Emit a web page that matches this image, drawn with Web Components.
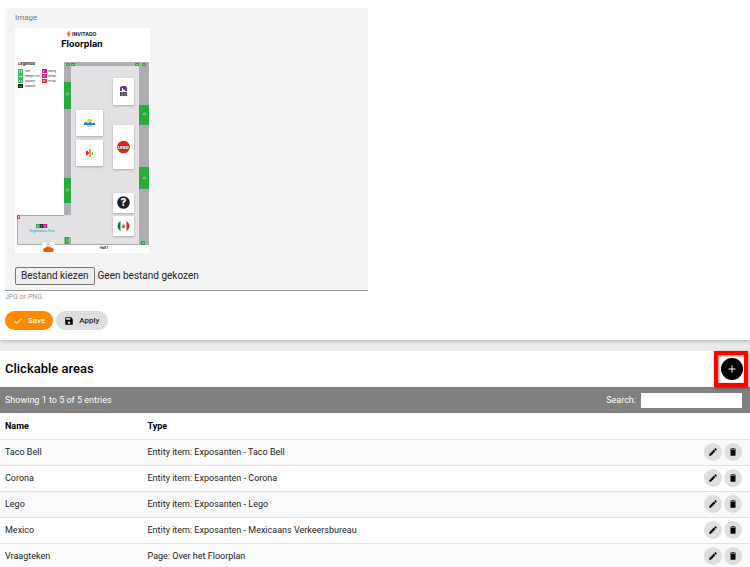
<!DOCTYPE html>
<html lang="nl">
<head>
<meta charset="utf-8">
<meta name="viewport" content="width=device-width, initial-scale=1">
<title>Floorplan</title>
<style>
  body {
    margin: 0;
    background: #ebebeb;
    color: #222;
    font: 9px/12px Roboto, "Liberation Sans", sans-serif;
  }
</style>
</head>
<body>
<floorplan-page></floorplan-page>

<script>
const ICONS = {
  check: "M9 16.17 4.83 12l-1.42 1.41L9 19 21 7l-1.41-1.41z",
  save: "M17 3H5a2 2 0 0 0-2 2v14a2 2 0 0 0 2 2h14a2 2 0 0 0 2-2V7l-4-4zm-5 16a3 3 0 1 1 0-6 3 3 0 0 1 0 6zm3-10H5V5h10v4z",
  add: "M19 13h-6v6h-2v-6H5v-2h6V5h2v6h6z",
  edit: "M3 17.25V21h3.75L17.81 9.94l-3.75-3.75L3 17.25zM20.71 7.04a1 1 0 0 0 0-1.41l-2.34-2.34a1 1 0 0 0-1.41 0l-1.83 1.83 3.75 3.75 1.83-1.83z",
  trash: "M6 19a2 2 0 0 0 2 2h8a2 2 0 0 0 2-2V7H6v12zM19 4h-3.5l-1-1h-5l-1 1H5v2h14V4z",
};

class UiIcon extends HTMLElement {
  constructor() {
    super();
    this.attachShadow({ mode: "open" });
  }

  connectedCallback() {
    this.shadowRoot.innerHTML = /*html*/ `
      <style>
        :host { display: block; width: 10px; height: 10px; }
        svg { display: block; width: 100%; height: 100%; fill: currentColor; }
      </style>
      <svg viewBox="0 0 24 24" aria-hidden="true"><path d="${ICONS[this.getAttribute("name")]}"/></svg>
    `;
  }
}

class PillButton extends HTMLElement {
  constructor() {
    super();
    this.attachShadow({ mode: "open" });
  }

  connectedCallback() {
    this.shadowRoot.innerHTML = /*html*/ `
      <style>
        :host { display: block; font-size: 8px; }
        button {
          display: flex;
          align-items: center;
          gap: 5px;
          height: 19px;
          padding: 0 8px;
          border: 0;
          border-radius: 10px;
          background: #dedede;
          color: #222;
          font: inherit;
          font-weight: 500;
          cursor: pointer;
        }
        ui-icon { color: #000; }
        :host([primary]) button { background: #ff8a00; color: #fff; }
        :host([primary]) ui-icon { color: #fff; }
      </style>
      <button type="button"><ui-icon name="${this.getAttribute("icon")}"></ui-icon><slot></slot></button>
    `;
  }
}

class RoundButton extends HTMLElement {
  constructor() {
    super();
    this.attachShadow({ mode: "open" });
  }

  connectedCallback() {
    this.shadowRoot.innerHTML = /*html*/ `
      <style>
        :host { display: block; position: relative; }
        button {
          display: grid;
          place-items: center;
          width: 18px;
          height: 18px;
          padding: 0;
          border: 0;
          border-radius: 50%;
          background: #dedede;
          color: #000;
          cursor: pointer;
        }
        :host([dark]) button { width: 22px; height: 22px; background: #000; color: #fff; }
        :host([dark]) ui-icon { width: 12px; height: 12px; }
        /* frame that points out the button */
        :host([highlight])::after {
          content: "";
          position: absolute;
          inset: -7px -5px -7px -7px;
          border: 4px solid #f00;
          box-shadow: 1px 1px 3px rgba(0,0,0,.5), inset 1px 1px 3px rgba(0,0,0,.5);
          pointer-events: none;
        }
      </style>
      <button type="button" aria-label="${this.getAttribute("label")}"><ui-icon name="${this.getAttribute("icon")}"></ui-icon></button>
    `;
  }
}

class FloorMap extends HTMLElement {
  constructor() {
    super();
    this.attachShadow({ mode: "open" });
  }

  connectedCallback() {
    this.shadowRoot.innerHTML = /*html*/ `
      <style>
        :host { display: block; width: 135px; }
        svg { display: block; width: 100%; }
        text { font-family: Inter, sans-serif; fill: #222; }
        .title { font-size: 9px; font-weight: 700; fill: #000; }
        .brand { font-size: 5px; font-weight: 700; }
        .head { font-size: 4px; font-weight: 700; }
        .tiny { font-size: 2px; }
        .green { fill: #28ab38; }
        .booth { fill: #fff; filter: drop-shadow(0 1px 1px rgba(0,0,0,.25)); }
      </style>
      <svg viewBox="0 0 135 225" role="img" aria-label="Floorplan">
        <rect width="135" height="225" fill="#fff"/>
        <path d="M54 4v4l-2-2z" fill="#e3197d"/><path d="M54 4l2 2-2 2z" fill="#ffb000"/><path d="M52 5l2-2 1 1-2 2zM52 7l2 2 1-1z" fill="#f28c00"/>
        <text class="brand" x="57" y="8">INVITADO</text>
        <text class="title" x="67" y="19" text-anchor="middle">Floorplan</text>

        <text class="head" x="3" y="37">Legenda</text>
        <g fill="#2dbd5a">
          <rect x="3" y="41" width="5" height="5"/><rect x="3" y="46" width="5" height="5"/><rect x="3" y="51" width="5" height="4"/>
        </g>
        <rect x="3" y="56" width="5" height="4" fill="#222"/>
        <rect x="27" y="41" width="5" height="4" fill="#e5128c"/><rect x="27" y="46" width="5" height="4" fill="#e5128c"/>
        <rect x="27" y="51" width="5" height="4" fill="#e02f35"/>
        <g fill="none" stroke="#fff" stroke-width=".6">
          <path d="M4.500 42v3m2-3v3M4 48.500h3m-1-1 1 1-1 1M4.500 52v2m2-2v2M4.500 59l1-1 1 1M28 44l2-2M28 49l2-2M29 52v2m-1-1h2"/>
        </g>
        <g>
          <text class="tiny" x="10" y="44">Toilet</text><text class="tiny" x="10" y="49">Emergency exit</text>
          <text class="tiny" x="10" y="54">Food point</text><text class="tiny" x="10" y="59">Cloakroom</text>
          <text class="tiny" x="33" y="44">Catering</text><text class="tiny" x="33" y="49">Specials</text><text class="tiny" x="33" y="54">First aid</text>
        </g>

        <rect x="56" y="37" width="68" height="179" fill="#e3e1e3"/>
        <path d="M58 40v120m6-120v120m6-120v120m6-120v120m6-120v120m6-120v120m6-120v120m30-120v120" stroke="#e0dee0" stroke-width=".6"/>
        <rect x="2.500" y="187" width="54" height="29" fill="#e3e1e3"/>
        <path d="M49 187.500H2.500v29H134" fill="none" stroke="#aaa8ac"/>
        <rect x="49" y="34" width="85" height="4" fill="#b0aeb2"/>
        <rect x="49" y="35" width="7" height="152" fill="#b0aeb2"/>
        <rect x="49" y="209" width="7" height="8" fill="#aaa8ac"/>
        <rect x="124" y="35" width="10" height="182" fill="#aeacb0"/>

        <g class="green">
          <rect x="49" y="54" width="7" height="27"/><rect x="49" y="150" width="7" height="25"/>
          <rect x="124" y="77" width="10" height="20"/><rect x="124" y="139" width="10" height="22"/>
          <rect x="51" y="35" width="4" height="3" rx="1"/><rect x="56" y="35" width="4" height="3"/>
          <rect x="120" y="35" width="4" height="3"/><rect x="127" y="35" width="4" height="3" rx="1"/>
          <rect x="50" y="209" width="4" height="7"/><rect x="126" y="213" width="4" height="4"/>
        </g>
        <g fill="none" stroke="#d5f2d8" stroke-width=".4">
          <path d="M51.500 65h2v2h-2zM51.500 161h2v2h-2zM128.500 85h2v2h-2zM128.500 149h2v2h-2zM52 36.500h2M57 36.500h2M121 36.500h2M128 36.500h2M51 211q1-1 2 0v4M51 213h2M127 215h2m-1-1v2"/>
        </g>

        <rect class="booth" x="98" y="50" width="21" height="27"/>
        <rect class="booth" x="61" y="82" width="27" height="26"/>
        <rect class="booth" x="61" y="112" width="27" height="26"/>
        <rect class="booth" x="98" y="97" width="21" height="44"/>
        <rect class="booth" x="98" y="165" width="21" height="20"/>
        <rect class="booth" x="98" y="188" width="21" height="20"/>
        <g fill="#fff" stroke="#dedede" stroke-width=".5">
          <circle cx="108.500" cy="63" r="6"/><circle cx="74.500" cy="95" r="6"/><circle cx="74.500" cy="125" r="6"/>
        </g>

        <path d="M105 63v-3q0-2 3-2h2q2 0 2 3v2h-2v-2l-2 1v-2h-1v3z" fill="#702f9b"/>
        <path d="M105 64h7v4h-7z" fill="#444"/><path d="M106 65h2m1 0h2m-5 2h2m1 0h2" stroke="#fff" stroke-width=".5"/>
        <path d="M108 61h2v1h-2z" fill="#e5489b"/>

        <path d="M72 93q0-2 2.500-2t2.500 2z" fill="#f6bc22"/><path d="M70 93h9v1h-9z" fill="#ffe06b"/>
        <path d="M69 96q0-2 2-2t2 2q0-2 2-2t2 2q0-2 3-1v2H69z" fill="#267fc0"/><path d="M72 98h5" stroke="#62aad5"/>

        <rect x="71" y="123" width="2" height="4" fill="#d71b78"/><rect x="74" y="121" width="2" height="8" fill="#f49a27"/>
        <rect x="73" y="124" width="1" height="2" fill="#e84c50"/><rect x="77" y="124" width="1" height="3" fill="#65b84b"/>

        <circle cx="108.500" cy="119" r="6.300" fill="#df261d"/>
        <text x="108.500" y="121" text-anchor="middle" style="font-size:4px;font-weight:900;fill:#fff;stroke:#5e3316;stroke-width:.9;paint-order:stroke">LEGO</text>

        <circle cx="108.500" cy="174.500" r="6.300" fill="#202124"/>
        <text x="108.500" y="178" text-anchor="middle" style="font-size:10px;font-weight:800;fill:#fff">?</text>

        <circle cx="108.500" cy="198" r="6" fill="#fff" stroke="#ddd" stroke-width=".4"/>
        <path d="M105.500 193v10q-3-2-3-5t3-5z" fill="#087849"/><path d="M111.500 193v10q3-2 3-5t-3-5z" fill="#d52632"/>
        <path d="M107 198q1-3 3-1 1 3-1.500 3t-1.500-2z" fill="#a28545"/><path d="M107.500 199q1 1 2 0" stroke="#398247" stroke-width=".7" fill="none"/>

        <rect x="2" y="187" width="3" height="4" fill="#d9404a"/><path d="M3 188h1v2H3z" fill="#ffc7c9"/>
        <rect x="21" y="196" width="4" height="4" fill="#2bae4d"/><rect x="25" y="196" width="3" height="4" fill="#333"/><rect x="28" y="196" width="4" height="4" fill="#e5128c"/>
        <path d="M22 198h2m2 0h1m2 0h2" stroke="#fff" stroke-width=".6"/>
        <text x="27" y="204" text-anchor="middle" style="font-size:3px;font-weight:600;fill:#2db6d7">Registration Area</text>
        <circle cx="29.500" cy="216.500" r="2.500" fill="#fff"/><circle cx="37" cy="216.500" r="2.500" fill="#fff"/>
        <path d="M28 221l5-3 6 3-1 3h-9z" fill="#ec5b0c"/>
        <text x="89" y="221" text-anchor="middle" style="font-size:3px;font-weight:800">Hall 1</text>
      </svg>
    `;
  }
}

class ImageField extends HTMLElement {
  constructor() {
    super();
    this.attachShadow({ mode: "open" });
  }

  connectedCallback() {
    this.shadowRoot.innerHTML = /*html*/ `
      <style>
        :host { display: block; width: 49%; min-width: 240px; }
        .field {
          display: flex;
          flex-direction: column;
          align-items: flex-start;
          padding: 4px 10px 5px;
          border-bottom: 1px solid #999;
          border-radius: 2px 2px 0 0;
          background: #f4f4f4;
        }
        .field__label { color: #777; font-size: 8px; }
        floor-map { margin: 4px 0 14px; }
        .field__picker {
          display: flex;
          align-items: center;
          gap: 3px;
          font-size: 10px;
        }
        .field__button {
          height: 18px;
          padding: 0 5px;
          border: 1px solid #767676;
          border-radius: 2px;
          background: #efefef;
          color: #222;
          font: inherit;
        }
        .field__hint { margin: 0; color: #999; font-size: 7px; }
      </style>
      <div class="field">
        <label class="field__label" for="file">Image</label>
        <floor-map></floor-map>
        <div class="field__picker">
          <input type="file" id="file" accept="image/png,image/jpeg" hidden>
          <button type="button" class="field__button">Bestand kiezen</button>
          <span class="field__name">Geen bestand gekozen</span>
        </div>
      </div>
      <p class="field__hint">JPG or PNG.</p>
    `;
    const input = this.shadowRoot.querySelector("input");
    this.shadowRoot.querySelector("button").addEventListener("click", () => input.click());
    input.addEventListener("change", () => {
      if (input.files[0]) this.shadowRoot.querySelector(".field__name").textContent = input.files[0].name;
    });
  }
}

class AreasTable extends HTMLElement {
  constructor() {
    super();
    this.attachShadow({ mode: "open" });
    this.areas = [
      ["Taco Bell", "Entity item: Exposanten - Taco Bell"],
      ["Corona", "Entity item: Exposanten - Corona"],
      ["Lego", "Entity item: Exposanten - Lego"],
      ["Mexico", "Entity item: Exposanten - Mexicaans Verkeersbureau"],
      ["Vraagteken", "Page: Over het Floorplan"],
    ];
  }

  connectedCallback() {
    this.shadowRoot.innerHTML = /*html*/ `
      <style>
        :host { display: block; }
        .bar {
          display: flex;
          align-items: center;
          justify-content: space-between;
          height: 26px;
          padding: 0 8px 0 5px;
          background: #808080;
          color: #fff;
        }
        .bar__search { display: flex; align-items: center; gap: 5px; }
        input {
          box-sizing: border-box;
          width: 101px;
          height: 15px;
          padding: 0 4px;
          border: 0;
          background: #fff;
          font: inherit;
        }
        table { width: 100%; border-collapse: collapse; table-layout: fixed; }
        th, td {
          box-sizing: border-box;
          height: 26px;
          padding: 0 0 0 5px;
          border-bottom: 1px solid #e2e2e2;
          text-align: left;
        }
        th { color: #000; font-weight: 700; }
        .name { width: 19%; }
        .tools { width: 80px; }
        tbody tr:nth-child(odd) { background: #f9f9f9; }
        .actions { display: flex; justify-content: flex-end; gap: 2px; padding-right: 8px; }
      </style>
      <div class="bar">
        <span>Showing 1 to 5 of 5 entries</span>
        <div class="bar__search">
          <label for="search">Search:</label>
          <input type="search" id="search">
        </div>
      </div>
      <table>
        <thead>
          <tr><th class="name">Name</th><th>Type</th><th class="tools"></th></tr>
        </thead>
        <tbody>${this.areas.map(([name, type]) => this.row(name, type)).join("")}</tbody>
      </table>
    `;
    this.shadowRoot.querySelector("input").addEventListener("input", (e) => this.filter(e.target.value));
  }

  row(name, type) {
    return /*html*/ `
      <tr>
        <td>${name}</td>
        <td>${type}</td>
        <td>
          <div class="actions">
            <round-button icon="edit" label="Edit"></round-button>
            <round-button icon="trash" label="Delete"></round-button>
          </div>
        </td>
      </tr>
    `;
  }

  filter(text) {
    this.shadowRoot.querySelectorAll("tbody tr").forEach((tr) => {
      tr.hidden = !tr.textContent.toLowerCase().includes(text.toLowerCase());
    });
  }
}

class FloorplanPage extends HTMLElement {
  constructor() {
    super();
    this.attachShadow({ mode: "open" });
  }

  connectedCallback() {
    this.shadowRoot.innerHTML = /*html*/ `
      <style>
        :host { display: flex; flex-direction: column; gap: 11px; }
        section { background: #fff; box-shadow: 0 1px 4px rgba(0,0,0,.25); }
        .edit { padding: 8px 5px 10px; }
        .edit__buttons { display: flex; gap: 3px; margin-top: 8px; }
        .areas { box-shadow: none; }
        header {
          display: flex;
          align-items: center;
          justify-content: space-between;
          height: 36px;
          padding: 0 7px 0 5px;
        }
        h2 { margin: 0; color: #000; font-size: 13px; line-height: 16px; font-weight: 500; }
        round-button { z-index: 1; }
      </style>
      <section class="edit">
        <image-field></image-field>
        <div class="edit__buttons">
          <pill-button icon="check" primary>Save</pill-button>
          <pill-button icon="save">Apply</pill-button>
        </div>
      </section>
      <section class="areas">
        <header>
          <h2>Clickable areas</h2>
          <round-button icon="add" label="Add area" dark highlight></round-button>
        </header>
        <areas-table></areas-table>
      </section>
    `;
  }
}

customElements.define("ui-icon", UiIcon);
customElements.define("pill-button", PillButton);
customElements.define("round-button", RoundButton);
customElements.define("floor-map", FloorMap);
customElements.define("image-field", ImageField);
customElements.define("areas-table", AreasTable);
customElements.define("floorplan-page", FloorplanPage);
</script>
</body>
</html>
